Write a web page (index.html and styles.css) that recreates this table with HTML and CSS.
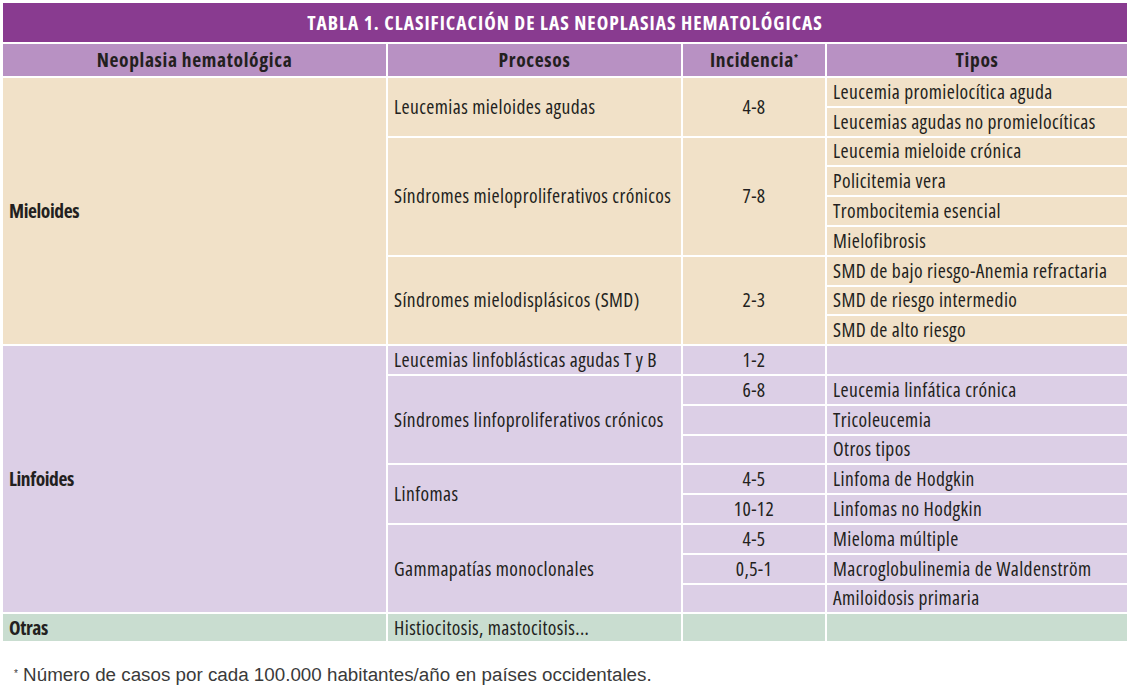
FILE: index.html
```html
<!DOCTYPE html>
<html lang="es">
<head>
<meta charset="utf-8">
<title>Tabla 1</title>
<link rel="stylesheet" href="styles.css">
</head>
<body>
<table class="tbl">
  <colgroup>
    <col class="c1"><col class="c2"><col class="c3"><col class="c4">
  </colgroup>
  <thead>
    <tr class="title-row"><th colspan="4">TABLA 1. CLASIFICACIÓN DE LAS NEOPLASIAS HEMATOLÓGICAS</th></tr>
    <tr class="head-row">
      <th>Neoplasia hematológica</th>
      <th>Procesos</th>
      <th>Incidencia<sup>*</sup></th>
      <th>Tipos</th>
    </tr>
  </thead>
  <tbody class="mie">
    <tr><td rowspan="9" class="grp">Mieloides</td><td rowspan="2">Leucemias mieloides agudas</td><td rowspan="2" class="num">4-8</td><td>Leucemia promielocítica aguda</td></tr>
    <tr><td>Leucemias agudas no promielocíticas</td></tr>
    <tr><td rowspan="4">Síndromes mieloproliferativos crónicos</td><td rowspan="4" class="num">7-8</td><td>Leucemia mieloide crónica</td></tr>
    <tr><td>Policitemia vera</td></tr>
    <tr><td>Trombocitemia esencial</td></tr>
    <tr><td>Mielofibrosis</td></tr>
    <tr><td rowspan="3">Síndromes mielodisplásicos (SMD)</td><td rowspan="3" class="num">2-3</td><td>SMD de bajo riesgo-Anemia refractaria</td></tr>
    <tr><td>SMD de riesgo intermedio</td></tr>
    <tr><td>SMD de alto riesgo</td></tr>
  </tbody>
  <tbody class="lin">
    <tr><td rowspan="9" class="grp">Linfoides</td><td>Leucemias linfoblásticas agudas T y B</td><td class="num">1-2</td><td></td></tr>
    <tr><td rowspan="3">Síndromes linfoproliferativos crónicos</td><td class="num">6-8</td><td>Leucemia linfática crónica</td></tr>
    <tr><td class="num"></td><td>Tricoleucemia</td></tr>
    <tr><td class="num"></td><td>Otros tipos</td></tr>
    <tr><td rowspan="2">Linfomas</td><td class="num">4-5</td><td>Linfoma de Hodgkin</td></tr>
    <tr><td class="num">10-12</td><td>Linfomas no Hodgkin</td></tr>
    <tr><td rowspan="3">Gammapatías monoclonales</td><td class="num">4-5</td><td>Mieloma múltiple</td></tr>
    <tr><td class="num">0,5-1</td><td>Macroglobulinemia de Waldenström</td></tr>
    <tr><td class="num"></td><td>Amiloidosis primaria</td></tr>
  </tbody>
  <tbody class="otr">
    <tr><td class="grp">Otras</td><td>Histiocitosis, mastocitosis...</td><td class="num"></td><td></td></tr>
  </tbody>
</table>
<p class="note"><sup>*</sup> Número de casos por cada 100.000 habitantes/año en países occidentales.</p>
</body>
</html>
```

FILE: styles.css
```css
html, body {
  margin: 0;
  padding: 0;
  background: #ffffff;
}
body {
  padding: 1px 0 0 1px;
  font-family: "Open Sans", "Noto Sans", sans-serif;
  font-stretch: 75%;
  color: #231f20;
}
.tbl {
  width: 1128px;
  border-collapse: separate;
  border-spacing: 2px;
  table-layout: fixed;
  font-size: 19.5px;
}
.c1 { width: 383px; }
.c2 { width: 293px; }
.c3 { width: 142px; }
.c4 { width: 300px; }

.tbl th, .tbl td {
  padding: 0 6px;
  vertical-align: middle;
  line-height: 20px;
  white-space: nowrap;
  overflow: hidden;
}
.title-row th {
  background: #893b90;
  color: #ffffff;
  height: 39px;
  font-size: 19.5px;
  letter-spacing: 1px;
  font-weight: bold;
  text-align: center;
  padding: 0;
}
.head-row th {
  background: #b891c3;
  height: 32px;
  font-weight: bold;
  letter-spacing: 0.65px;
  text-align: center;
  color: #231f20;
}
.head-row sup {
  font-size: 9px;
  letter-spacing: 0;
  vertical-align: top;
  position: relative;
  top: -2px;
}
.tbl td {
  height: 27.8px;
  text-align: left;
  letter-spacing: 0.4px;
}
.tbl td.num { text-align: center; }
.tbl td.grp { font-weight: bold; letter-spacing: -0.4px; }

.mie td { background: #f1e1c8; }
.lin td { background: #dccfe6; }
.otr td { background: #c9ddd0; height: 27px; }

.note {
  margin: 22px 0 0 13px;
  font-family: "Liberation Sans", sans-serif;
  font-stretch: normal;
  font-size: 18.8px;
  line-height: 20px;
  color: #3a3a3a;
}
.note sup {
  font-size: 10px;
  vertical-align: top;
  position: relative;
  top: -1px;
}
```
